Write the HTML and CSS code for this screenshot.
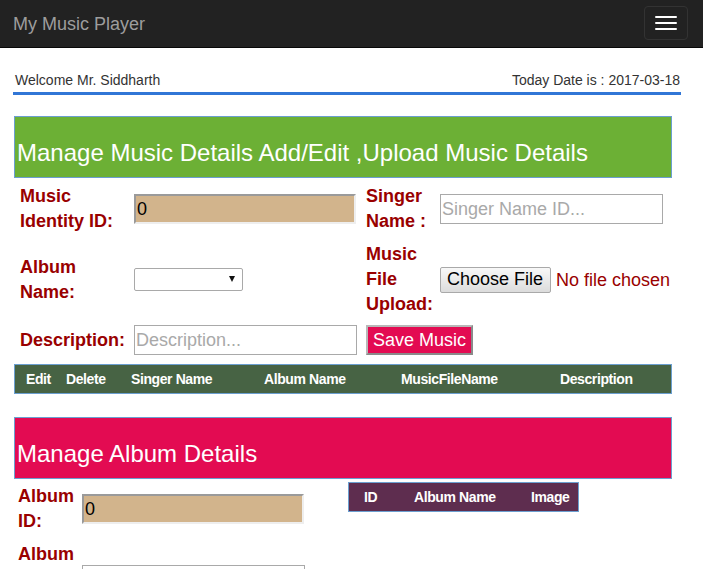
FILE: index.html
```html
<!DOCTYPE html>
<html lang="en">
<head>
<meta charset="utf-8">
<title>My Music Player</title>
<link rel="stylesheet" href="styles.css">
</head>
<body>
<nav class="navbar">
  <span class="brand">My Music Player</span>
  <button class="toggler" type="button" aria-label="Toggle navigation">
    <span class="bar"></span><span class="bar"></span><span class="bar"></span>
  </button>
</nav>
<main class="main">
  <div class="welcome">
    <span>Welcome Mr. Siddharth</span>
    <span>Today Date is : 2017-03-18</span>
  </div>

  <section class="section">
    <h2 class="section-title green">Manage Music Details Add/Edit ,Upload Music Details</h2>
    <div class="music-form">
      <label class="lbl">Music Identity ID:</label>
      <input class="inp readonly" value="0">
      <label class="lbl">Singer Name :</label>
      <input class="inp" placeholder="Singer Name ID...">

      <label class="lbl">Album Name:</label>
      <div class="select-wrap"><select class="sel"></select></div>
      <label class="lbl">Music File Upload:</label>
      <input class="file" type="file">

      <label class="lbl">Description:</label>
      <input class="inp desc" placeholder="Description...">
      <div class="save-cell"><button class="save" type="button">Save Music</button></div>
    </div>
    <table class="hdr-table music-table">
      <colgroup>
        <col class="c1"><col class="c2"><col class="c3"><col class="c4"><col class="c5"><col class="c6">
      </colgroup>
      <thead>
        <tr><th class="first">Edit</th><th>Delete</th><th>Singer Name</th><th>Album Name</th><th>MusicFileName</th><th>Description</th></tr>
      </thead>
    </table>
  </section>

  <section class="section album">
    <h2 class="section-title pink">Manage Album Details</h2>
    <div class="album-body">
      <div class="album-form">
        <label class="lbl">Album ID:</label>
        <input class="inp readonly" value="0">
        <label class="lbl">Album Name:</label>
        <input class="inp second" placeholder="">
      </div>
      <table class="hdr-table album-table">
        <colgroup><col class="a1"><col class="a2"><col class="a3"></colgroup>
        <thead><tr><th class="first">ID</th><th>Album Name</th><th>Image</th></tr></thead>
      </table>
    </div>
  </section>
</main>
</body>
</html>
```
FILE: styles.css
```css
* { box-sizing: border-box; }

html, body {
  margin: 0;
  padding: 0;
  background: #fff;
  font-family: "Liberation Sans", Arial, sans-serif;
  overflow: hidden;
}

.navbar {
  height: 48px;
  background: #222;
  border-bottom: 1px solid #080808;
  display: flex;
  align-items: center;
  justify-content: space-between;
  padding: 0 15px 0 13px;
}

.brand {
  color: #9d9d9d;
  font-size: 18px;
  line-height: 20px;
}

.toggler {
  width: 44px;
  height: 34px;
  margin-top: -2px;
  padding: 9px 10px;
  background: transparent;
  border: 1px solid #333;
  border-radius: 4px;
  display: flex;
  flex-direction: column;
  gap: 4px;
}

.bar {
  display: block;
  width: 22px;
  height: 2px;
  background: #fff;
  border-radius: 1px;
}

.main {
  padding: 0 22px 0 13px;
}

.welcome {
  display: flex;
  justify-content: space-between;
  font-size: 14px;
  line-height: 20px;
  color: #333;
  padding: 22px 1px 2px 2px;
  border-bottom: 3px solid #3176d6;
}

.section {
  margin: 21px 0 0 1px;
  width: 658px;
}

.section.album {
  margin-top: 23px;
}

.section-title {
  margin: 0;
  height: 62px;
  border: 1px solid #6b9fd0;
  color: #fff;
  font-weight: normal;
  font-size: 24px;
  line-height: 28px;
  padding: 22px 0 0 2px;
}

.green { background: #6cb035; }
.pink { background: #e30b52; }

.lbl {
  color: #990000;
  font-weight: bold;
  font-size: 18px;
  line-height: 25px;
}

.music-form {
  display: grid;
  grid-template-columns: 114px 232px 74px 1fr;
  align-items: center;
  row-gap: 8px;
  padding: 6px 0 0 6px;
}

.inp {
  height: 30px;
  width: 223px;
  border: 1px solid #a9a9a9;
  font-family: "Liberation Sans", Arial, sans-serif;
  font-size: 18px;
  padding: 0 1px;
  color: #000;
  background: #fff;
  outline: none;
}

.inp::placeholder { color: #a9a9a9; }

.inp.readonly {
  width: 222px;
  background: #d2b48c;
  border: 2px solid;
  border-color: #9a9a9a #eeeeee #eeeeee #9a9a9a;
}

.select-wrap {
  position: relative;
  width: 109px;
  height: 23px;
}

.sel {
  appearance: none;
  -webkit-appearance: none;
  width: 109px;
  height: 23px;
  border: 1px solid #a9a9a9;
  border-radius: 2px;
  background: #fff;
  display: block;
}

.select-wrap::after {
  content: "";
  position: absolute;
  right: 8px;
  top: 8px;
  border-left: 3px solid transparent;
  border-right: 3px solid transparent;
  border-top: 6px solid #111;
}

.file {
  font-family: "Liberation Sans", Arial, sans-serif;
  font-size: 18px;
  color: #990000;
  width: 250px;
}

.file::file-selector-button {
  font-family: "Liberation Sans", Arial, sans-serif;
  font-size: 18px;
  color: #000;
  height: 26px;
  padding: 0 7px 0 6px;
  margin-right: 5px;
  border: 1px solid #a9a9a9;
  border-radius: 2px;
  background: linear-gradient(#f8f8f8, #dcdcdc);
}

.save-cell {
  grid-column: 3 / span 2;
}

.save {
  height: 30px;
  display: block;
  padding: 0 5px;
  background: #e30b52;
  color: #fff;
  font-family: "Liberation Sans", Arial, sans-serif;
  font-size: 18px;
  border: 2px solid;
  border-color: #b8b8b8 #8a8a8a #8a8a8a #b8b8b8;
}

.hdr-table {
  border-collapse: separate;
  border-spacing: 0;
  table-layout: fixed;
  border: 1px solid #6b9fd0;
  color: #fff;
}

.hdr-table th {
  text-align: left;
  font-weight: bold;
  font-size: 14px;
  letter-spacing: -0.4px;
  padding: 0;
  height: 28px;
  white-space: nowrap;
}

.music-table {
  width: 658px;
  margin-top: 9px;
  background: #476344;
}

.music-table th.first { padding-left: 11px; }
.c1 { width: 51px; }
.c2 { width: 65px; }
.c3 { width: 133px; }
.c4 { width: 137px; }
.c5 { width: 159px; }
.c6 { width: 111px; }

.album-body {
  display: flex;
  align-items: flex-start;
}

.album-form {
  width: 334px;
  display: grid;
  grid-template-columns: 64px 240px;
  align-items: center;
  row-gap: 8px;
  padding: 5px 0 0 4px;
}

.album-form .lbl:nth-of-type(2) {
  align-self: start;
  height: 75px;
}

.album-form .inp.second {
  align-self: start;
  margin-top: 23px;
}

.album-table {
  width: 231px;
  margin-top: 3px;
  background: #5e2d4f;
}

.album-table th.first { padding-left: 15px; }
.a1 { width: 65px; }
.a2 { width: 117px; }
.a3 { width: 47px; }
```
